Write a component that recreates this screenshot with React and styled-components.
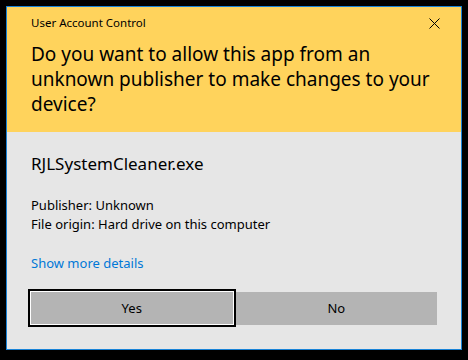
import styled, { createGlobalStyle } from "styled-components"

const GlobalStyle = createGlobalStyle`
    html, body {
        margin: 0;
        padding: 0;
        background: #000;
    }
    body {
        font-family: "Noto Sans", "Open Sans", sans-serif;
    }
`

const Screen = styled.div`
    width: 468px;
    height: 360px;
    padding: 6px;
    box-sizing: border-box;
    background: #000;
`

const Dialog = styled.div`
    width: 456px;
    height: 344px;
    box-sizing: border-box;
    border: 1px solid #1883d7;
    background: #e6e6e6;
    display: flex;
    flex-direction: column;
`

const Header = styled.div`
    background: #ffd35c;
    height: 125px;
    box-sizing: border-box;
    padding: 8px 24px 0 24px;
`

const TitleBar = styled.div`
    display: flex;
    align-items: center;
    justify-content: space-between;
    height: 16px;
`

const Title = styled.span`
    font-size: 11.5px;
    line-height: 16px;
    color: #000;
`

const CloseButton = styled.button`
    width: 12px;
    height: 12px;
    padding: 0;
    margin-right: -3px;
    border: none;
    background: transparent;
    display: flex;
    align-items: center;
    justify-content: center;
    cursor: pointer;
`

const Question = styled.h1`
    margin: 11px 0 0 0;
    font-size: 19px;
    line-height: 25px;
    font-weight: 400;
    color: #000;
`

const Body = styled.div`
    flex: 1;
    padding: 21px 24px 0 21px;
    display: flex;
    flex-direction: column;
`

const AppName = styled.div`
    padding-left: 3px;
    font-size: 17px;
    line-height: 22px;
    color: #000;
`

const Details = styled.div`
    margin-top: 21px;
    padding-left: 3px;
    font-size: 13px;
    line-height: 19px;
    color: #000;
`

const MoreLink = styled.a`
    margin-top: 20px;
    padding-left: 3px;
    font-size: 13px;
    line-height: 19px;
    color: #0078d7;
    text-decoration: none;
    cursor: pointer;
`

const ButtonRow = styled.div`
    margin-top: 16px;
    display: flex;
    align-items: center;
`

const ActionButton = styled.button`
    font-family: inherit;
    font-size: 13px;
    line-height: 19px;
    color: #000;
    background: #b4b4b4;
    padding: 0;
    box-sizing: border-box;
    border: ${p => (p.$focused ? "2px solid #000" : "none")};
    box-shadow: ${p => (p.$focused ? "inset 0 0 0 1px #fff" : "none")};
    width: ${p => (p.$focused ? "208px" : "202px")};
    height: ${p => (p.$focused ? "38px" : "33px")};
    margin-top: ${p => (p.$focused ? "0" : "1px")};
    cursor: pointer;
`

export default function App() {
    return (
        <>
            <GlobalStyle />
            <Screen>
                <Dialog>
                    <Header>
                        <TitleBar>
                            <Title>User Account Control</Title>
                            <CloseButton aria-label="Close">
                                <svg width="11" height="11" viewBox="0 0 11 11">
                                    <path d="M0.5 0.5 L10.5 10.5 M10.5 0.5 L0.5 10.5" stroke="#000" strokeWidth="1" fill="none" />
                                </svg>
                            </CloseButton>
                        </TitleBar>
                        <Question>Do you want to allow this app from an unknown publisher to make changes to your device?</Question>
                    </Header>
                    <Body>
                        <AppName>RJLSystemCleaner.exe</AppName>
                        <Details>
                            Publisher: Unknown<br />
                            File origin: Hard drive on this computer
                        </Details>
                        <MoreLink>Show more details</MoreLink>
                        <ButtonRow>
                            <ActionButton $focused>Yes</ActionButton>
                            <ActionButton>No</ActionButton>
                        </ButtonRow>
                    </Body>
                </Dialog>
            </Screen>
        </>
    )
}
